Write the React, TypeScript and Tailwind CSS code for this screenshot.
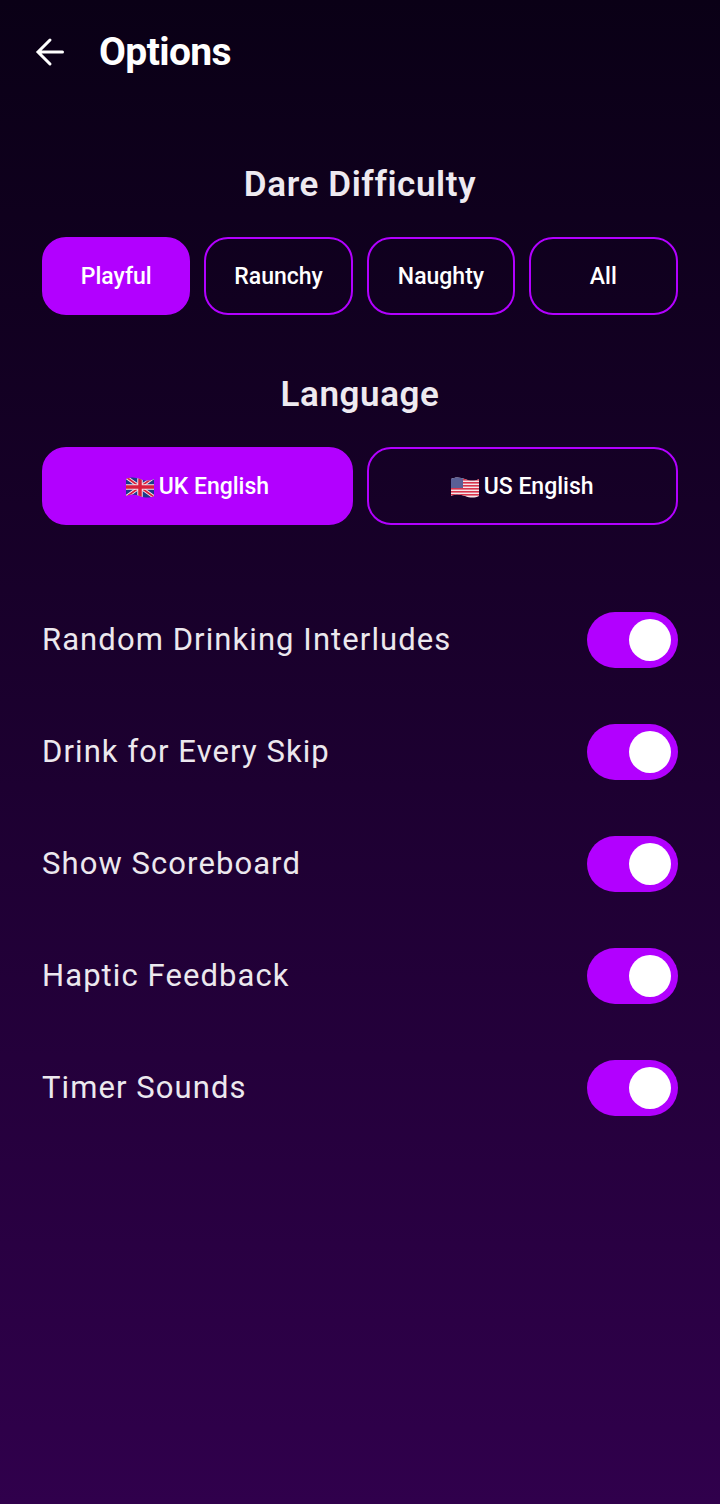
const font = { fontFamily: "Roboto, sans-serif" };

function UKFlag() {
  return (
    <svg width="28" height="22" viewBox="0 0 28 22" className="shrink-0">
      <defs>
        <clipPath id="uk"><path d="M0 3c4-2 9-2 14 0s10 2 14 0v17c-4 2-9 2-14 0s-10-2-14 0z" /></clipPath>
      </defs>
      <g clipPath="url(#uk)">
        <rect width="28" height="22" fill="#1b3a8c" />
        <path d="M0 1 28 21M28 1 0 21" stroke="#f4dfe6" strokeWidth="3.500" />
        <path d="M0 1 28 21M28 1 0 21" stroke="#d8203a" strokeWidth="1.800" />
        <path d="M14 0v22M0 11h28" stroke="#f4dfe6" strokeWidth="5.500" />
        <path d="M14 0v22M0 11h28" stroke="#d8203a" strokeWidth="3.500" />
      </g>
    </svg>
  );
}

function USFlag() {
  const ys = [3, 6, 9, 12, 15, 18];
  return (
    <svg width="28" height="22" viewBox="0 0 28 22" className="shrink-0">
      <defs>
        <clipPath id="us"><path d="M0 3c4-2 9-2 14 0s10 2 14 0v17c-4 2-9 2-14 0s-10-2-14 0z" /></clipPath>
      </defs>
      <g clipPath="url(#us)">
        <rect width="28" height="22" fill="#f4e6ea" />
        {ys.map((y) => (
          <rect key={y} x="0" y={y} width="28" height="1.600" fill="#d8344c" />
        ))}
        <rect x="0" y="0" width="12" height="12" fill="#5a5f96" />
      </g>
    </svg>
  );
}

function Toggle() {
  return (
    <div className="flex h-14 w-[91px] shrink-0 items-center justify-end rounded-full bg-[#b200ff] pr-[7px]">
      <div className="h-[42px] w-[42px] rounded-full bg-white" />
    </div>
  );
}

function Choice({ active, children }: { active?: boolean; children: React.ReactNode }) {
  return (
    <div
      className={
        "flex h-[78px] flex-1 items-center justify-center gap-[5px] rounded-[24px] border-[2.500px] border-[#b200ff] pt-[2px] text-[23px] font-medium text-white " +
        (active ? "bg-[#b200ff]" : "bg-transparent")
      }
    >
      {children}
    </div>
  );
}

function Heading({ children }: { children: React.ReactNode }) {
  return (
    <h2 className="text-center text-[35px] leading-[40px] font-semibold tracking-[0.6px] text-[#eeeaf0]">
      {children}
    </h2>
  );
}

const rows = [
  "Random Drinking Interludes",
  "Drink for Every Skip",
  "Show Scoreboard",
  "Haptic Feedback",
  "Timer Sounds",
];

export default function App() {
  return (
    <div
      style={font}
      className="flex h-[1504px] w-[720px] flex-col overflow-hidden bg-gradient-to-b from-[#0a0016] to-[#30004c] px-[42px]"
    >
      <header className="flex h-[104px] items-center">
        <svg width="34" height="34" viewBox="0 0 34 34" fill="none" stroke="#fff" strokeWidth="3" strokeLinecap="round" strokeLinejoin="miter" className="-ml-[9px] shrink-0">
          <path d="M29.500 17H5.500M17 5 5 17l12 12" />
        </svg>
        <h1 className="ml-[32px] text-[39px] leading-[44px] font-bold tracking-[-0.6px] text-white">Options</h1>
      </header>

      <div className="mt-[61px]"><Heading>Dare Difficulty</Heading></div>
      <div className="mt-[32px] flex gap-[14px] pr-[0.5px]">
        <Choice active>Playful</Choice>
        <Choice>Raunchy</Choice>
        <Choice>Naughty</Choice>
        <Choice>All</Choice>
      </div>

      <div className="mt-[60px]"><Heading>Language</Heading></div>
      <div className="mt-[32px] flex gap-[14px] pr-[0.5px]">
        <Choice active><UKFlag />UK English</Choice>
        <Choice><USFlag />US English</Choice>
      </div>

      <div className="mt-[87px] flex flex-col gap-14">
        {rows.map((r) => (
          <div key={r} className="flex h-14 items-center justify-between">
            <span className="text-[31px] tracking-[1.08px] text-[#ece8ee]">{r}</span>
            <Toggle />
          </div>
        ))}
      </div>
    </div>
  );
}
